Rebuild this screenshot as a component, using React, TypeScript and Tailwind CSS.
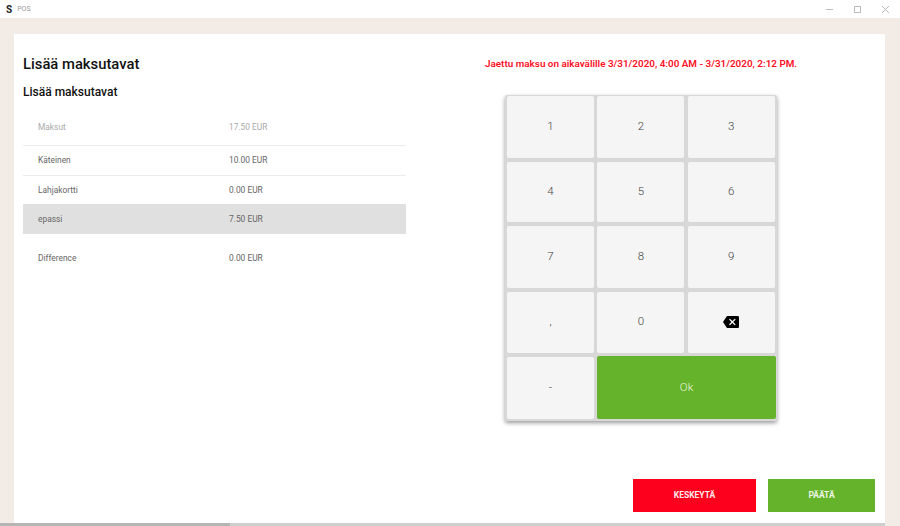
const rows = [
  { label: 'Käteinen', value: '10.00 EUR', cls: 'h-[30px] border-b border-[#ececec]' },
  { label: 'Lahjakortti', value: '0.00 EUR', cls: 'h-[28px] pt-[1px]' },
  { label: 'epassi', value: '7.50 EUR', cls: 'h-[30px] bg-[#e0e0e0] pt-[1px]' }
];

const keys = ['1', '2', '3', '4', '5', '6', '7', '8', '9', ',', '0'];

function Key({ children }: { children?: React.ReactNode }) {
  return (
    <button className="flex items-center justify-center rounded-[2px] bg-[#f5f5f5] pb-[1px] text-[11.5px] font-light text-[#444]">
      {children}
    </button>
  );
}

export default function App() {
  return (
    <div className="flex h-[526px] w-[900px] flex-col overflow-hidden bg-[#f3ece6] font-['Roboto',sans-serif]">
      <div className="flex h-[18px] shrink-0 items-center bg-white pl-[6px]">
        <span className="text-[10px] font-bold text-[#222]">S</span>
        <span className="ml-[5px] text-[7px] text-[#999]">POS</span>
        <div className="ml-auto flex items-center gap-[21px] pr-[11px]">
          <svg width="7" height="7" viewBox="0 0 7 7" className="text-[#bbb]">
            <path d="M0 3.5h7" stroke="currentColor" fill="none" />
          </svg>
          <svg width="7" height="7" viewBox="0 0 7 7" className="text-[#bbb]">
            <rect x="0.5" y="0.5" width="6" height="6" stroke="currentColor" fill="none" />
          </svg>
          <svg width="7" height="7" viewBox="0 0 7 7" className="text-[#bbb]">
            <path d="M0 0l7 7M7 0l-7 7" stroke="currentColor" fill="none" />
          </svg>
        </div>
      </div>

      <div className="flex min-h-0 flex-1 flex-col pt-[16px] pl-[14px] pr-[15px]">
        <div className="flex min-h-0 flex-1 flex-col bg-white">
          <div className="flex flex-1">
            <div className="w-[392px] pl-[9px] pt-[21px]">
              <h1 className="text-[14.8px] leading-[18px] font-medium text-[#111]">Lisää maksutavat</h1>
              <h2 className="mt-[11px] text-[12px] leading-[16px] font-medium text-[#111]">Lisää maksutavat</h2>
              <div className="mt-[8px] text-[8.4px] text-[#666]">
                <div className="flex h-[38px] items-center border-b border-[#ececec] pt-[2px] text-[#aaa]">
                  <span className="w-[206px] pl-[15px]">Maksut</span>
                  <span>17.50 EUR</span>
                </div>
                {rows.map((row) => (
                  <div key={row.label} className={`flex items-center ${row.cls}`}>
                    <span className="w-[206px] pl-[15px]">{row.label}</span>
                    <span>{row.value}</span>
                  </div>
                ))}
                <div className="mt-[9px] flex h-[30px] items-center pt-[1px]">
                  <span className="w-[206px] pl-[15px]">Difference</span>
                  <span>0.00 EUR</span>
                </div>
              </div>
            </div>

            <div className="flex flex-1 flex-col pt-[23px] pl-[99px]">
              <p className="-ml-[20px] text-[9.9px] leading-[13px] font-semibold whitespace-nowrap text-[#ff0f1f]">
                Jaettu maksu on aikavälille 3/31/2020, 4:00 AM - 3/31/2020, 2:12 PM.
              </p>
              <div className="mt-[25px] grid h-[326px] w-[272px] grid-cols-[87px_87px_87px] grid-rows-[62px_60px_62px_61px_62px] gap-x-[3.4px] gap-y-[4px] rounded-[2px] bg-[#d8d8d8] px-[2px] pt-[1px] shadow-[0_2px_4px_rgba(0,0,0,0.4)]">
                {keys.map((key) => (
                  <Key key={key}>{key}</Key>
                ))}
                <Key>
                  <svg width="16" height="16" viewBox="0 0 24 24" fill="#000">
                    <path d="M22 3H7c-.69 0-1.23.35-1.59.88L0 12l5.41 8.11c.36.53.9.89 1.59.89h15c1.1 0 2-.9 2-2V5c0-1.1-.9-2-2-2zm-3 12.59L17.59 17 14 13.41 10.41 17 9 15.59 12.59 12 9 8.41 10.41 7 14 10.59 17.59 7 19 8.41 15.41 12 19 15.59z" />
                  </svg>
                </Key>
                <Key>-</Key>
                <button className="col-span-2 -mt-[1px] -mr-[1px] flex items-center justify-center rounded-[2px] bg-[#65b32a] text-[11.5px] font-light text-[#e8f3dc]">
                  Ok
                </button>
              </div>
            </div>
          </div>

          <div className="flex justify-end gap-[12px] pr-[10px] pb-[11px]">
            <button className="flex h-[33px] w-[123px] items-center justify-center bg-[#fd001d] text-[8.5px] font-bold text-[#fdeaea]">
              KESKEYTÄ
            </button>
            <button className="flex h-[33px] w-[107px] items-center justify-center bg-[#65b32a] text-[8.5px] font-bold text-[#eef6e6]">
              PÄÄTÄ
            </button>
          </div>
        </div>
        <div className="-ml-[14px] flex h-[3px] w-[885px] shrink-0">
          <div className="w-[230px] bg-[#b5b5b5]" />
          <div className="flex-1 bg-[#cfcfcf]" />
        </div>
      </div>
    </div>
  );
}
